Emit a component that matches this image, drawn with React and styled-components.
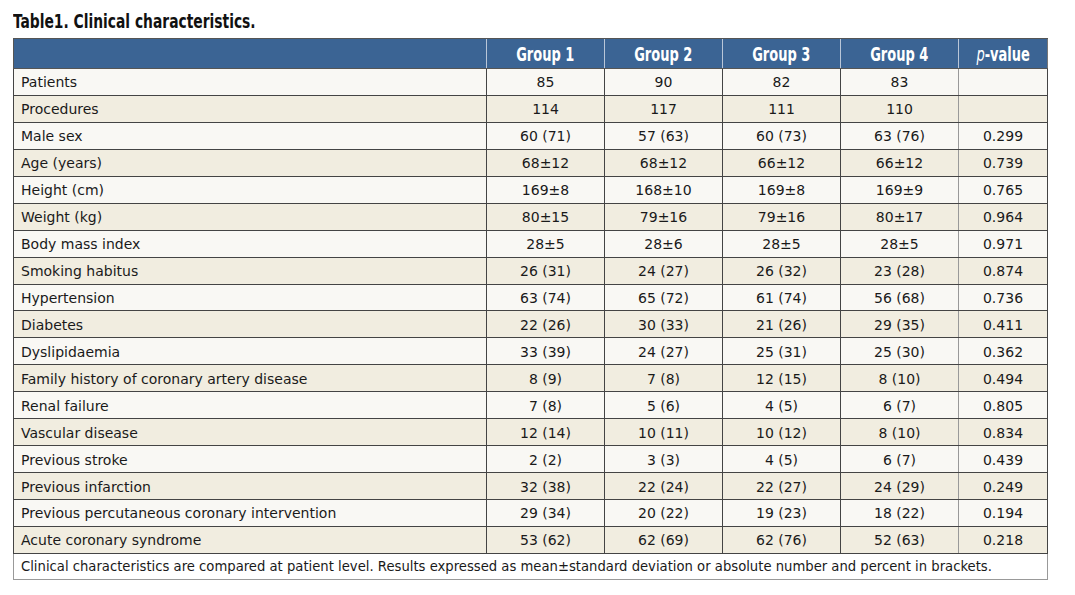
import React from "react";
import styled, { createGlobalStyle } from "styled-components";

const Global = createGlobalStyle`
  html, body { margin: 0; padding: 0; background: #ffffff; }
  body { width: 1075px; height: 595px; overflow: hidden; }
`;

const Page = styled.div`
  padding: 10px 28px 0 13px;
  display: flex;
  flex-direction: column;
  gap: 6px;
`;

const Title = styled.h1`
  margin: 0;
  font-family: "DejaVu Sans Condensed", "DejaVu Sans", sans-serif;
  font-weight: 700;
  font-size: 19px;
  line-height: 22px;
  color: #111;
  transform: scaleX(0.81);
  transform-origin: left center;
  white-space: nowrap;
`;

const Table = styled.table`
  width: 1035px;
  border-collapse: collapse;
  table-layout: fixed;
  font-family: "DejaVu Sans", sans-serif;
  font-size: 14px;
  color: #1a1a1a;
  border: 1px solid #777;
`;

const HeadCell = styled.th`
  background: #3b6494;
  color: #ffffff;
  height: 29px;
  padding: 0;
  font-family: "DejaVu Sans Condensed", "DejaVu Sans", sans-serif;
  font-weight: 700;
  font-size: 19px;
  text-align: center;
  border-left: 1px solid #b9c6d8;
  border-top: 1px solid #555;
  border-bottom: 1px solid #555;
  &:first-child { border-left: 1px solid #555; }
`;

const HeadText = styled.span`
  display: inline-block;
  transform: scaleX(0.76);
  white-space: nowrap;
  em { font-style: italic; font-weight: 400; }
`;

const Row = styled.tr`
  background: ${(p) => (p.$alt ? "#f1ede0" : "#f9f8f4")};
`;

const Cell = styled.td`
  height: 24.95px;
  padding: 1px 0 0 ${(p) => (p.$label ? "7px" : "0")};
  text-align: ${(p) => (p.$label ? "left" : "center")};
  border: 1px solid #444;
  border-right-color: ${(p) => (p.$soft ? "#999" : "#444")};
  white-space: nowrap;
  overflow: hidden;
`;

const FootCell = styled.td`
  height: 25px;
  padding: 0 0 0 7px;
  background: #ffffff;
  border: 1px solid #999;
  font-size: 13.2px;
  white-space: nowrap;
`;

const rows = [
  ["Patients", "85", "90", "82", "83", ""],
  ["Procedures", "114", "117", "111", "110", ""],
  ["Male sex", "60 (71)", "57 (63)", "60 (73)", "63 (76)", "0.299"],
  ["Age (years)", "68±12", "68±12", "66±12", "66±12", "0.739"],
  ["Height (cm)", "169±8", "168±10", "169±8", "169±9", "0.765"],
  ["Weight (kg)", "80±15", "79±16", "79±16", "80±17", "0.964"],
  ["Body mass index", "28±5", "28±6", "28±5", "28±5", "0.971"],
  ["Smoking habitus", "26 (31)", "24 (27)", "26 (32)", "23 (28)", "0.874"],
  ["Hypertension", "63 (74)", "65 (72)", "61 (74)", "56 (68)", "0.736"],
  ["Diabetes", "22 (26)", "30 (33)", "21 (26)", "29 (35)", "0.411"],
  ["Dyslipidaemia", "33 (39)", "24 (27)", "25 (31)", "25 (30)", "0.362"],
  ["Family history of coronary artery disease", "8 (9)", "7 (8)", "12 (15)", "8 (10)", "0.494"],
  ["Renal failure", "7 (8)", "5 (6)", "4 (5)", "6 (7)", "0.805"],
  ["Vascular disease", "12 (14)", "10 (11)", "10 (12)", "8 (10)", "0.834"],
  ["Previous stroke", "2 (2)", "3 (3)", "4 (5)", "6 (7)", "0.439"],
  ["Previous infarction", "32 (38)", "22 (24)", "22 (27)", "24 (29)", "0.249"],
  ["Previous percutaneous coronary intervention", "29 (34)", "20 (22)", "19 (23)", "18 (22)", "0.194"],
  ["Acute coronary syndrome", "53 (62)", "62 (69)", "62 (76)", "52 (63)", "0.218"],
];

export default function App() {
  return (
    <>
      <Global />
      <Page>
        <Title>Table1. Clinical characteristics.</Title>
        <Table>
          <colgroup>
            <col style={{ width: "473px" }} />
            <col style={{ width: "118px" }} />
            <col style={{ width: "118px" }} />
            <col style={{ width: "118px" }} />
            <col style={{ width: "118px" }} />
            <col style={{ width: "89px" }} />
          </colgroup>
          <thead>
            <tr>
              <HeadCell></HeadCell>
              <HeadCell><HeadText>Group 1</HeadText></HeadCell>
              <HeadCell><HeadText>Group 2</HeadText></HeadCell>
              <HeadCell><HeadText>Group 3</HeadText></HeadCell>
              <HeadCell><HeadText>Group 4</HeadText></HeadCell>
              <HeadCell><HeadText><em>p</em>-value</HeadText></HeadCell>
            </tr>
          </thead>
          <tbody>
            {rows.map((r, i) => (
              <Row key={r[0]} $alt={i % 2 === 1}>
                <Cell $label>{r[0]}</Cell>
                <Cell>{r[1]}</Cell>
                <Cell>{r[2]}</Cell>
                <Cell>{r[3]}</Cell>
                <Cell $soft>{r[4]}</Cell>
                <Cell>{r[5]}</Cell>
              </Row>
            ))}
            <tr>
              <FootCell colSpan={6}>
                Clinical characteristics are compared at patient level. Results expressed as mean±standard deviation or absolute number and percent in brackets.
              </FootCell>
            </tr>
          </tbody>
        </Table>
      </Page>
    </>
  );
}
